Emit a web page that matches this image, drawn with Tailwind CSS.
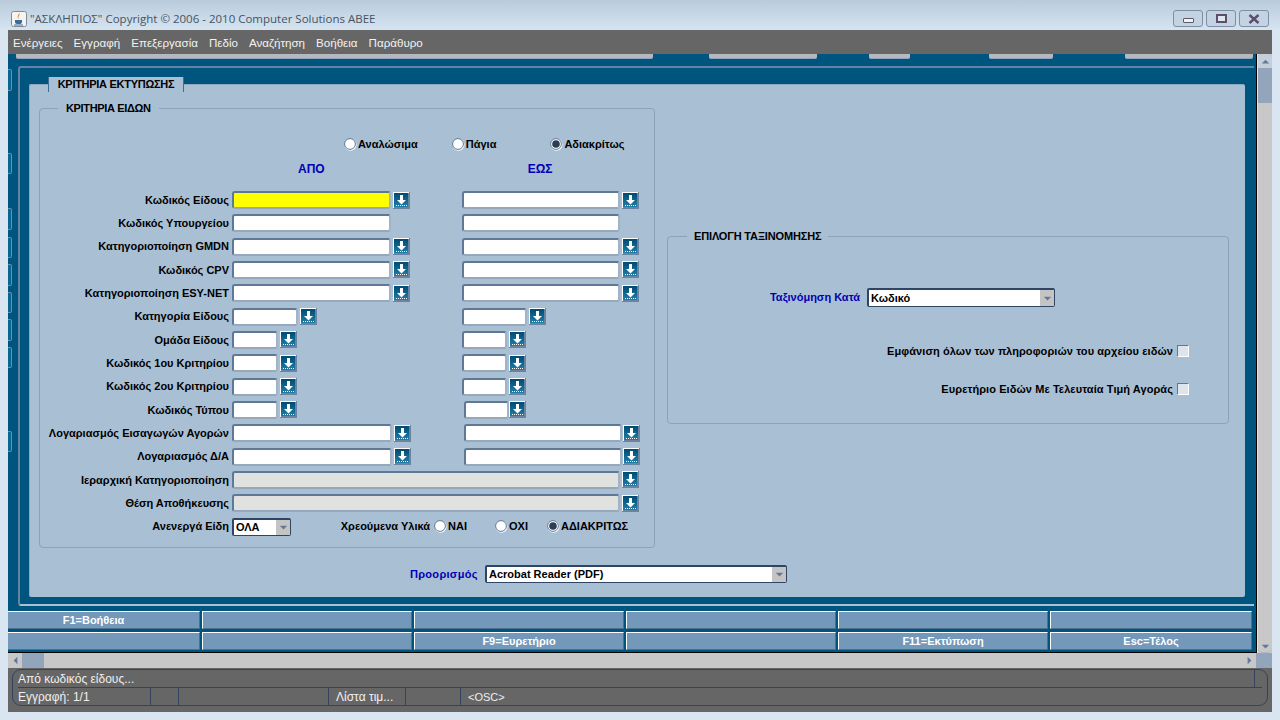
<!DOCTYPE html>
<html lang="el">
<head>
  <meta charset="UTF-8" />
  <title>ΑΣΚΛΗΠΙΟΣ</title>
  <script src="https://cdn.jsdelivr.net/npm/@tailwindcss/browser@4"></script>
</head>
<body class="w-[1280px] h-[720px] overflow-hidden bg-white [font-family:'Liberation_Sans',sans-serif] text-[11px] text-black">
  <svg class="absolute w-0 h-0">
    <defs>
      <linearGradient id="lovFill" x1="0" y1="0" x2="0" y2="1">
        <stop offset="0" stop-color="#004a73" />
        <stop offset="1" stop-color="#1f7fa8" />
      </linearGradient>
    </defs>
    <symbol id="lov" viewBox="0 0 17 17">
      <rect width="17" height="17" fill="#6a83a1" />
      <rect width="16" height="1" fill="#fff" />
      <rect width="1" height="16" fill="#fff" />
      <rect x="1" y="1" width="14" height="14" fill="url(#lovFill)" />
      <rect x="7" y="3" width="3" height="5" fill="#fff" />
      <path d="M4 8h9l-4.500 4.500z" fill="#fff" />
      <path d="M3 13.500h11" stroke="#fff" stroke-dasharray="1 1" />
    </symbol>
    <symbol id="radio" viewBox="0 0 13 13">
      <circle cx="6.500" cy="6.800" r="6" fill="#fff" />
      <circle cx="6" cy="6" r="5.400" fill="#fff" stroke="#5f7896" />
    </symbol>
    <symbol id="radioOn" viewBox="0 0 13 13">
      <circle cx="6.500" cy="6.800" r="6" fill="#fff" />
      <circle cx="6" cy="6" r="5.400" fill="#fff" stroke="#5f7896" />
      <circle cx="6" cy="6" r="3.800" fill="#2c3e55" />
    </symbol>
    <symbol id="down" viewBox="0 0 14 8">
      <path d="M1 1h12L7 7z" fill="#64799a" />
    </symbol>
  </svg>

  <div class="relative w-[1280px] h-[720px] rounded-t-[7px] border border-[#50575f] bg-[#d9e6f2] -mx-px -mt-px box-content">
    <!-- title bar -->
    <div class="h-[30px] flex items-center pl-[11px] pt-[7px] bg-gradient-to-b from-[#b9cbdb] to-[#d6e4f1]">
      <svg class="w-[16px] h-[16px] shrink-0" viewBox="0 0 16 16">
        <rect x="0.500" y="0.500" width="15" height="15" rx="2" fill="#f4f4f0" stroke="#7f8b99" />
        <path d="M8 2c2 2-2 3 0 6-3-2 0-4 0-6z" fill="#e07b1a" />
        <path d="M4 9h7v2c0 1-1 2-2 2H6c-1 0-2-1-2-2z" fill="#3d6a9a" />
        <path d="M3 14h9" stroke="#3d6a9a" />
      </svg>
      <span class="ml-[3px] [font-family:'Open_Sans',sans-serif] text-[11.5px] text-[#47535f] whitespace-nowrap">"ΑΣΚΛΗΠΙΟΣ" Copyright © 2006 - 2010 Computer Solutions ABEE</span>
      <div class="ml-auto mr-[11px] flex gap-[3px]">
        <div class="w-[30px] h-[17px] rounded-[3px] border border-[#7f8ea3] bg-[#c3d3e2] flex items-center justify-center">
          <div class="w-[11px] h-[5px] mt-[3px] border border-[#5a5a6a] bg-[#f2f2f2] rounded-[1px]"></div>
        </div>
        <div class="w-[30px] h-[17px] rounded-[3px] border border-[#7f8ea3] bg-[#c3d3e2] flex items-center justify-center">
          <div class="w-[11px] h-[9px] border-2 border-[#5a4f6e] bg-[#dfe6ee]"></div>
        </div>
        <div class="w-[30px] h-[17px] rounded-[3px] border border-[#7f8ea3] bg-[#c3d3e2] flex items-center justify-center">
          <svg class="w-[12px] h-[10px]" viewBox="0 0 12 10"><path d="M1.500 1l9 8M10.500 1l-9 8" stroke="#5a4f6e" stroke-width="2.400" /></svg>
        </div>
      </div>
    </div>

    <div class="mx-[8px] w-[1264px]">
      <!-- menu -->
      <div class="h-[24px] bg-[#666666] flex items-center gap-[11px] pl-[5px] pt-px text-[11.6px] text-[#f2f2f2] whitespace-nowrap">
        <span>Ενέργειες</span><span>Εγγραφή</span><span>Επεξεργασία</span><span>Πεδίο</span><span>Αναζήτηση</span><span>Βοήθεια</span><span>Παράθυρο</span>
      </div>

      <div class="flex h-[599px]">
        <!-- form area -->
        <div class="relative w-[1249px] bg-[#00557f] border-r border-b border-black">
          <div class="h-[5px] flex">
            <div class="ml-[8px] w-[637px] rounded-b-[2px] bg-[#b5b9bf] border-b border-[#8fa3bd]"></div>
            <div class="ml-[56px] w-[108px] rounded-b-[2px] bg-[#b5b9bf] border-b border-[#8fa3bd]"></div>
            <div class="ml-[52px] w-[41px] rounded-b-[2px] bg-[#b5b9bf] border-b border-[#8fa3bd]"></div>
            <div class="ml-[79px] w-[64px] rounded-b-[2px] bg-[#b5b9bf] border-b border-[#8fa3bd]"></div>
            <div class="ml-[72px] w-[128px] rounded-b-[2px] bg-[#b5b9bf] border-b border-[#8fa3bd]"></div>
          </div>

          <!-- stacked canvas tabs behind, only the edge shows -->
          <div class="absolute left-0 top-[15px] w-[4px] h-[22px] bg-[#0a6590] border-t border-r border-b border-[#6f8cab] rounded-r-[2px]"></div>
          <div class="absolute left-0 top-[99px] w-[4px] h-[21px] bg-[#0a6590] border-t border-r border-b border-[#6f8cab] rounded-r-[2px]"></div>
          <div class="absolute left-0 top-[154px] w-[4px] h-[22px] bg-[#0a6590] border-t border-r border-b border-[#6f8cab] rounded-r-[2px]"></div>
          <div class="absolute left-0 top-[183px] w-[4px] h-[21px] bg-[#0a6590] border-t border-r border-b border-[#6f8cab] rounded-r-[2px]"></div>
          <div class="absolute left-0 top-[210px] w-[4px] h-[22px] bg-[#0a6590] border-t border-r border-b border-[#6f8cab] rounded-r-[2px]"></div>
          <div class="absolute left-0 top-[238px] w-[4px] h-[21px] bg-[#0a6590] border-t border-r border-b border-[#6f8cab] rounded-r-[2px]"></div>
          <div class="absolute left-0 top-[265px] w-[4px] h-[22px] bg-[#0a6590] border-t border-r border-b border-[#6f8cab] rounded-r-[2px]"></div>
          <div class="absolute left-0 top-[293px] w-[4px] h-[21px] bg-[#0a6590] border-t border-r border-b border-[#6f8cab] rounded-r-[2px]"></div>
          <div class="absolute left-0 top-[377px] w-[4px] h-[21px] bg-[#0a6590] border-t border-r border-b border-[#6f8cab] rounded-r-[2px]"></div>

          <!-- outer frame -->
          <div class="mt-[7px] ml-[10px] w-[1236px] h-[540px] border-t-2 border-l-2 border-b-2 border-t-[#6583a3] border-l-[#6583a3] border-b-[#a9bfd4] rounded-tl-[3px] rounded-bl-[3px] pl-[9px] pt-[16px]">
            <!-- main panel -->
            <div class="relative w-[1216px] h-[513px] bg-[#a9bfd4] border-t border-l border-[#8ea6c0] rounded-[2px]">
              <div class="absolute -top-[8px] left-[18px] w-[136px] h-[15px] bg-[#a9bfd4] border-l border-r border-[#3d6f96] flex items-center justify-center font-bold tracking-[-0.28px] whitespace-nowrap">ΚΡΙΤΗΡΙΑ ΕΚΤΥΠΩΣΗΣ</div>

              <div class="flex items-start h-[463px]">
                <!-- item criteria -->
                <div class="relative mt-[23px] ml-[9px] w-[616px] h-[440px] border border-[#8ea1b7] rounded-[4px] shrink-0">
                  <div class="absolute -top-[8px] left-[18px] h-[15px] px-[8px] bg-[#a9bfd4] flex items-center font-bold tracking-[-0.35px] whitespace-nowrap">ΚΡΙΤΗΡΙΑ ΕΙΔΩΝ</div>

                  <div class="mt-[28px] h-[14px] flex items-center font-bold whitespace-nowrap">
                    <svg class="ml-[304px] w-[13px] h-[13px]"><use href="#radio" /></svg><span class="ml-[1px]">Αναλώσιμα</span>
                    <svg class="ml-[34px] w-[13px] h-[13px]"><use href="#radio" /></svg><span class="ml-[1px]">Πάγια</span>
                    <svg class="ml-[54px] w-[13px] h-[13px]"><use href="#radioOn" /></svg><span class="ml-[1px]">Αδιακρίτως</span>
                  </div>
                  <div class="mt-[11px] h-[14px] flex items-center font-bold text-[#0000b4] text-[12px]">
                    <span class="ml-[258px]">ΑΠΟ</span><span class="ml-[203px]">ΕΩΣ</span>
                  </div>

                  <div class="mt-[15px] flex flex-col gap-[5.33px] font-bold whitespace-nowrap">
                    <div class="flex h-[18px] items-center">
                      <label class="w-[189px] text-right">Κωδικός Είδους</label>
                      <div class="ml-[3px] w-[230px] flex items-center">
                        <input class="w-[159px] h-[18px] rounded-[3px] border-2 border-t-[#5f7896] border-l-[#5f7896] border-r-[#a3b2c4] border-b-[#98a8bb] bg-[#ffff00]" />
                        <svg class="ml-[2px] w-[17px] h-[17px]"><use href="#lov" /></svg>
                      </div>
                      <input class="w-[158px] h-[18px] rounded-[3px] border-2 border-t-[#5f7896] border-l-[#5f7896] border-r-[#a3b2c4] border-b-[#98a8bb] bg-white" />
                      <svg class="ml-[2px] w-[17px] h-[17px]"><use href="#lov" /></svg>
                    </div>
                    <div class="flex h-[18px] items-center">
                      <label class="w-[189px] text-right">Κωδικός Υπουργείου</label>
                      <div class="ml-[3px] w-[230px] flex items-center">
                        <input class="w-[159px] h-[18px] rounded-[3px] border-2 border-t-[#5f7896] border-l-[#5f7896] border-r-[#a3b2c4] border-b-[#98a8bb] bg-white" />
                      </div>
                      <input class="w-[158px] h-[18px] rounded-[3px] border-2 border-t-[#5f7896] border-l-[#5f7896] border-r-[#a3b2c4] border-b-[#98a8bb] bg-white" />
                    </div>
                    <div class="flex h-[18px] items-center">
                      <label class="w-[189px] text-right">Κατηγοριοποίηση GMDN</label>
                      <div class="ml-[3px] w-[230px] flex items-center">
                        <input class="w-[159px] h-[18px] rounded-[3px] border-2 border-t-[#5f7896] border-l-[#5f7896] border-r-[#a3b2c4] border-b-[#98a8bb] bg-white" />
                        <svg class="ml-[2px] w-[17px] h-[17px]"><use href="#lov" /></svg>
                      </div>
                      <input class="w-[158px] h-[18px] rounded-[3px] border-2 border-t-[#5f7896] border-l-[#5f7896] border-r-[#a3b2c4] border-b-[#98a8bb] bg-white" />
                      <svg class="ml-[2px] w-[17px] h-[17px]"><use href="#lov" /></svg>
                    </div>
                    <div class="flex h-[18px] items-center">
                      <label class="w-[189px] text-right">Κωδικός CPV</label>
                      <div class="ml-[3px] w-[230px] flex items-center">
                        <input class="w-[159px] h-[18px] rounded-[3px] border-2 border-t-[#5f7896] border-l-[#5f7896] border-r-[#a3b2c4] border-b-[#98a8bb] bg-white" />
                        <svg class="ml-[2px] w-[17px] h-[17px]"><use href="#lov" /></svg>
                      </div>
                      <input class="w-[158px] h-[18px] rounded-[3px] border-2 border-t-[#5f7896] border-l-[#5f7896] border-r-[#a3b2c4] border-b-[#98a8bb] bg-white" />
                      <svg class="ml-[2px] w-[17px] h-[17px]"><use href="#lov" /></svg>
                    </div>
                    <div class="flex h-[18px] items-center">
                      <label class="w-[189px] text-right">Κατηγοριοποίηση ESY-NET</label>
                      <div class="ml-[3px] w-[230px] flex items-center">
                        <input class="w-[159px] h-[18px] rounded-[3px] border-2 border-t-[#5f7896] border-l-[#5f7896] border-r-[#a3b2c4] border-b-[#98a8bb] bg-white" />
                        <svg class="ml-[2px] w-[17px] h-[17px]"><use href="#lov" /></svg>
                      </div>
                      <input class="w-[158px] h-[18px] rounded-[3px] border-2 border-t-[#5f7896] border-l-[#5f7896] border-r-[#a3b2c4] border-b-[#98a8bb] bg-white" />
                      <svg class="ml-[2px] w-[17px] h-[17px]"><use href="#lov" /></svg>
                    </div>
                    <div class="flex h-[18px] items-center">
                      <label class="w-[189px] text-right">Κατηγορία Είδους</label>
                      <div class="ml-[3px] w-[230px] flex items-center">
                        <input class="w-[66px] h-[18px] rounded-[3px] border-2 border-t-[#5f7896] border-l-[#5f7896] border-r-[#a3b2c4] border-b-[#98a8bb] bg-white" />
                        <svg class="ml-[2px] w-[17px] h-[17px]"><use href="#lov" /></svg>
                      </div>
                      <input class="w-[65px] h-[18px] rounded-[3px] border-2 border-t-[#5f7896] border-l-[#5f7896] border-r-[#a3b2c4] border-b-[#98a8bb] bg-white" />
                      <svg class="ml-[2px] w-[17px] h-[17px]"><use href="#lov" /></svg>
                    </div>
                    <div class="flex h-[18px] items-center">
                      <label class="w-[189px] text-right">Ομάδα Είδους</label>
                      <div class="ml-[3px] w-[230px] flex items-center">
                        <input class="w-[46px] h-[18px] rounded-[3px] border-2 border-t-[#5f7896] border-l-[#5f7896] border-r-[#a3b2c4] border-b-[#98a8bb] bg-white" />
                        <svg class="ml-[2px] w-[17px] h-[17px]"><use href="#lov" /></svg>
                      </div>
                      <input class="w-[45px] h-[18px] rounded-[3px] border-2 border-t-[#5f7896] border-l-[#5f7896] border-r-[#a3b2c4] border-b-[#98a8bb] bg-white" />
                      <svg class="ml-[2px] w-[17px] h-[17px]"><use href="#lov" /></svg>
                    </div>
                    <div class="flex h-[18px] items-center">
                      <label class="w-[189px] text-right">Κωδικός 1ου Κριτηρίου</label>
                      <div class="ml-[3px] w-[230px] flex items-center">
                        <input class="w-[46px] h-[18px] rounded-[3px] border-2 border-t-[#5f7896] border-l-[#5f7896] border-r-[#a3b2c4] border-b-[#98a8bb] bg-white" />
                        <svg class="ml-[2px] w-[17px] h-[17px]"><use href="#lov" /></svg>
                      </div>
                      <input class="w-[45px] h-[18px] rounded-[3px] border-2 border-t-[#5f7896] border-l-[#5f7896] border-r-[#a3b2c4] border-b-[#98a8bb] bg-white" />
                      <svg class="ml-[2px] w-[17px] h-[17px]"><use href="#lov" /></svg>
                    </div>
                    <div class="flex h-[18px] items-center">
                      <label class="w-[189px] text-right">Κωδικός 2ου Κριτηρίου</label>
                      <div class="ml-[3px] w-[230px] flex items-center">
                        <input class="w-[46px] h-[18px] rounded-[3px] border-2 border-t-[#5f7896] border-l-[#5f7896] border-r-[#a3b2c4] border-b-[#98a8bb] bg-white" />
                        <svg class="ml-[2px] w-[17px] h-[17px]"><use href="#lov" /></svg>
                      </div>
                      <input class="w-[45px] h-[18px] rounded-[3px] border-2 border-t-[#5f7896] border-l-[#5f7896] border-r-[#a3b2c4] border-b-[#98a8bb] bg-white" />
                      <svg class="ml-[2px] w-[17px] h-[17px]"><use href="#lov" /></svg>
                    </div>
                    <div class="flex h-[18px] items-center">
                      <label class="w-[189px] text-right">Κωδικός Τύπου</label>
                      <div class="ml-[3px] w-[232px] flex items-center">
                        <input class="w-[46px] h-[18px] rounded-[3px] border-2 border-t-[#5f7896] border-l-[#5f7896] border-r-[#a3b2c4] border-b-[#98a8bb] bg-white" />
                        <svg class="ml-[2px] w-[17px] h-[17px]"><use href="#lov" /></svg>
                      </div>
                      <input class="w-[45px] h-[18px] rounded-[3px] border-2 border-t-[#5f7896] border-l-[#5f7896] border-r-[#a3b2c4] border-b-[#98a8bb] bg-white" />
                      <svg class="w-[17px] h-[17px]"><use href="#lov" /></svg>
                    </div>
                    <div class="flex h-[18px] items-center">
                      <label class="w-[189px] text-right">Λογαριασμός Εισαγωγών Αγορών</label>
                      <div class="ml-[3px] w-[232px] flex items-center">
                        <input class="w-[160px] h-[18px] rounded-[3px] border-2 border-t-[#5f7896] border-l-[#5f7896] border-r-[#a3b2c4] border-b-[#98a8bb] bg-white" />
                        <svg class="ml-[2px] w-[17px] h-[17px]"><use href="#lov" /></svg>
                      </div>
                      <input class="w-[158px] h-[18px] rounded-[3px] border-2 border-t-[#5f7896] border-l-[#5f7896] border-r-[#a3b2c4] border-b-[#98a8bb] bg-white" />
                      <svg class="ml-px w-[17px] h-[17px]"><use href="#lov" /></svg>
                    </div>
                    <div class="flex h-[18px] items-center">
                      <label class="w-[189px] text-right">Λογαριασμός Δ/Α</label>
                      <div class="ml-[3px] w-[232px] flex items-center">
                        <input class="w-[160px] h-[18px] rounded-[3px] border-2 border-t-[#5f7896] border-l-[#5f7896] border-r-[#a3b2c4] border-b-[#98a8bb] bg-white" />
                        <svg class="ml-[2px] w-[17px] h-[17px]"><use href="#lov" /></svg>
                      </div>
                      <input class="w-[158px] h-[18px] rounded-[3px] border-2 border-t-[#5f7896] border-l-[#5f7896] border-r-[#a3b2c4] border-b-[#98a8bb] bg-white" />
                      <svg class="ml-px w-[17px] h-[17px]"><use href="#lov" /></svg>
                    </div>
                    <div class="flex h-[18px] items-center">
                      <label class="w-[189px] text-right">Ιεραρχική Κατηγοριοποίηση</label>
                      <input disabled class="ml-[3px] w-[388px] h-[18px] rounded-[3px] border-2 border-t-[#5f7896] border-l-[#5f7896] border-r-[#a3b2c4] border-b-[#98a8bb] bg-[#dfe2df]" />
                      <svg class="ml-[2px] w-[17px] h-[17px]"><use href="#lov" /></svg>
                    </div>
                    <div class="flex h-[18px] items-center">
                      <label class="w-[189px] text-right">Θέση Αποθήκευσης</label>
                      <input disabled class="ml-[3px] w-[388px] h-[18px] rounded-[3px] border-2 border-t-[#5f7896] border-l-[#5f7896] border-r-[#a3b2c4] border-b-[#98a8bb] bg-[#dfe2df]" />
                      <svg class="ml-[2px] w-[17px] h-[17px]"><use href="#lov" /></svg>
                    </div>
                    <div class="flex h-[18px] items-center">
                      <label class="w-[189px] text-right">Ανενεργά Είδη</label>
                      <div class="ml-[3px] w-[59px] h-[18px] flex items-center rounded-[2px] border border-[#2f4565] border-t-2 border-l-2 bg-white pl-[2px]">
                        <span class="flex-1">ΟΛΑ</span>
                        <span class="w-[14px] h-full bg-[#c4c4c4] flex items-center justify-center"><svg class="w-[9px] h-[5px]"><use href="#down" /></svg></span>
                      </div>
                      <span class="ml-[49px] w-[90px] text-right">Χρεούμενα Υλικά</span>
                      <svg class="ml-[4px] w-[13px] h-[13px]"><use href="#radio" /></svg><span class="ml-[1px] w-[47px]">ΝΑΙ</span>
                      <svg class="w-[13px] h-[13px]"><use href="#radio" /></svg><span class="ml-[1px] w-[38px]">ΟΧΙ</span>
                      <svg class="w-[13px] h-[13px]"><use href="#radioOn" /></svg><span class="ml-[1px]">ΑΔΙΑΚΡΙΤΩΣ</span>
                    </div>
                  </div>
                </div>

                <!-- sort selection -->
                <div class="relative mt-[151px] ml-[12px] w-[562px] h-[188px] border border-[#8ea1b7] rounded-[4px] shrink-0 font-bold whitespace-nowrap">
                  <div class="absolute -top-[8px] left-[19px] h-[15px] px-[7px] bg-[#a9bfd4] flex items-center tracking-[-0.15px]">ΕΠΙΛΟΓΗ ΤΑΞΙΝΟΜΗΣΗΣ</div>
                  <div class="mt-[51px] flex items-center h-[19px]">
                    <span class="w-[192px] text-right text-[#0000b4]">Ταξινόμηση Κατά</span>
                    <div class="ml-[7px] w-[188px] h-[19px] flex items-center rounded-[2px] border border-[#2f4565] border-t-2 border-l-2 bg-white pl-[2px]">
                      <span class="flex-1">Κωδικό</span>
                      <span class="w-[14px] h-full bg-[#c4c4c4] flex items-center justify-center"><svg class="w-[9px] h-[5px]"><use href="#down" /></svg></span>
                    </div>
                  </div>
                  <div class="mt-[37px] flex items-center justify-end h-[14px] pr-[39px]">
                    <span class="tracking-[0.08px]">Εμφάνιση όλων των πληροφοριών του αρχείου ειδών</span>
                    <span class="ml-[4px] w-[12px] h-[12px] bg-white/60 border border-t-[#5f7896] border-l-[#5f7896] border-r-white border-b-white"></span>
                  </div>
                  <div class="mt-[24px] flex items-center justify-end h-[14px] pr-[39px]">
                    <span class="tracking-[0.08px]">Ευρετήριο Ειδών Με Τελευταία Τιμή Αγοράς</span>
                    <span class="ml-[4px] w-[12px] h-[12px] bg-white/60 border border-t-[#5f7896] border-l-[#5f7896] border-r-white border-b-white"></span>
                  </div>
                </div>
              </div>

              <div class="mt-[17px] ml-[380px] flex items-center h-[18px] font-bold">
                <span class="w-[68px] text-[#0000b4] tracking-[0.3px]">Προορισμός</span>
                <div class="ml-[7px] w-[302px] h-[18px] flex items-center rounded-[2px] border border-[#2f4565] border-t-2 border-l-2 bg-white pl-[2px]">
                  <span class="flex-1">Acrobat Reader (PDF)</span>
                  <span class="w-[14px] h-full bg-[#c4c4c4] flex items-center justify-center"><svg class="w-[9px] h-[5px]"><use href="#down" /></svg></span>
                </div>
              </div>
            </div>
          </div>

          <!-- function keys -->
          <div class="mt-[5px] grid grid-cols-[192px_210px_210px_210px_210px_202px] grid-rows-[18px_18px] gap-x-[2px] gap-y-[3px] font-bold text-white text-center">
            <div class="bg-[#7398ba] border-t border-t-white border-r border-b border-r-[#4d6d91] border-b-[#4d6d91] pr-[20px] leading-[16px]">F1=Βοήθεια</div>
            <div class="bg-[#7398ba] border border-t-white border-l-white border-r-[#4d6d91] border-b-[#4d6d91]"></div>
            <div class="bg-[#7398ba] border border-t-white border-l-white border-r-[#4d6d91] border-b-[#4d6d91]"></div>
            <div class="bg-[#7398ba] border border-t-white border-l-white border-r-[#4d6d91] border-b-[#4d6d91]"></div>
            <div class="bg-[#7398ba] border border-t-white border-l-white border-r-[#4d6d91] border-b-[#4d6d91]"></div>
            <div class="bg-[#7398ba] border border-t-white border-l-white border-r-[#4d6d91] border-b-[#4d6d91]"></div>
            <div class="bg-[#7398ba] border-t border-t-white border-r border-b border-r-[#4d6d91] border-b-[#4d6d91]"></div>
            <div class="bg-[#7398ba] border border-t-white border-l-white border-r-[#4d6d91] border-b-[#4d6d91]"></div>
            <div class="bg-[#7398ba] border border-t-white border-l-white border-r-[#4d6d91] border-b-[#4d6d91] leading-[16px]">F9=Ευρετήριο</div>
            <div class="bg-[#7398ba] border border-t-white border-l-white border-r-[#4d6d91] border-b-[#4d6d91]"></div>
            <div class="bg-[#7398ba] border border-t-white border-l-white border-r-[#4d6d91] border-b-[#4d6d91] leading-[16px]">F11=Εκτύπωση</div>
            <div class="bg-[#7398ba] border border-t-white border-l-white border-r-[#4d6d91] border-b-[#4d6d91] leading-[16px]">Esc=Τέλος</div>
          </div>
        </div>

        <!-- vertical scrollbar -->
        <div class="ml-px w-[14px] bg-[#c8c8c8] flex flex-col">
          <div class="h-[14px] bg-[#c5cfdb] rounded-t-[5px] flex items-center justify-center">
            <svg class="w-[9px] h-[5px] rotate-180"><use href="#down" /></svg>
          </div>
          <div class="h-[35px] bg-[#92a5bb]"></div>
          <div class="mt-auto h-[13px] bg-[#c8c8c8] rounded-b-[5px] border-b border-[#aab8c8] flex items-center justify-center">
            <svg class="w-[9px] h-[5px]"><use href="#down" /></svg>
          </div>
        </div>
      </div>

      <!-- horizontal scrollbar -->
      <div class="h-[15px] flex bg-[#c8c8c8]">
        <div class="w-[14px] bg-[#c8c8c8] rounded-l-[5px] flex items-center justify-center">
          <svg class="w-[9px] h-[5px] rotate-90"><use href="#down" /></svg>
        </div>
        <div class="w-[22px] bg-[#92a5bb]"></div>
        <div class="ml-auto w-[14px] bg-[#c8c8c8] rounded-r-[5px] flex items-center justify-center">
          <svg class="w-[9px] h-[5px] -rotate-90"><use href="#down" /></svg>
        </div>
        <div class="w-[16px] bg-[#92a5bb]"></div>
      </div>

      <!-- status bar -->
      <div class="h-[44px] bg-[#666666] pt-px pl-[4px] pr-[4px] text-[12px] text-[#f0f0f0] whitespace-nowrap">
        <div class="h-[37px] border border-[#33445f] rounded-[9px] pl-[5px] flex flex-col">
          <div class="h-[18px] flex items-center border-b border-[#33445f] mr-[5px]">
            <span class="flex-1">Από κωδικός είδους...</span>
            <span class="w-px h-full bg-[#33445f] mr-[7px]"></span>
          </div>
          <div class="flex-1 flex items-center">
            <span class="w-[132px]">Εγγραφή: 1/1</span>
            <span class="w-px h-full bg-[#33445f]"></span>
            <span class="w-[27px]"></span>
            <span class="w-px h-full bg-[#33445f]"></span>
            <span class="w-[149px]"></span>
            <span class="w-px h-full bg-[#33445f]"></span>
            <span class="w-[76px] pl-[7px]">Λίστα τιμ...</span>
            <span class="w-px h-full bg-[#33445f]"></span>
            <span class="w-[54px]"></span>
            <span class="w-px h-full bg-[#33445f]"></span>
            <span class="pl-[7px] text-[11px]">&lt;OSC&gt;</span>
          </div>
        </div>
      </div>
    </div>
  </div>
</body>
</html>
